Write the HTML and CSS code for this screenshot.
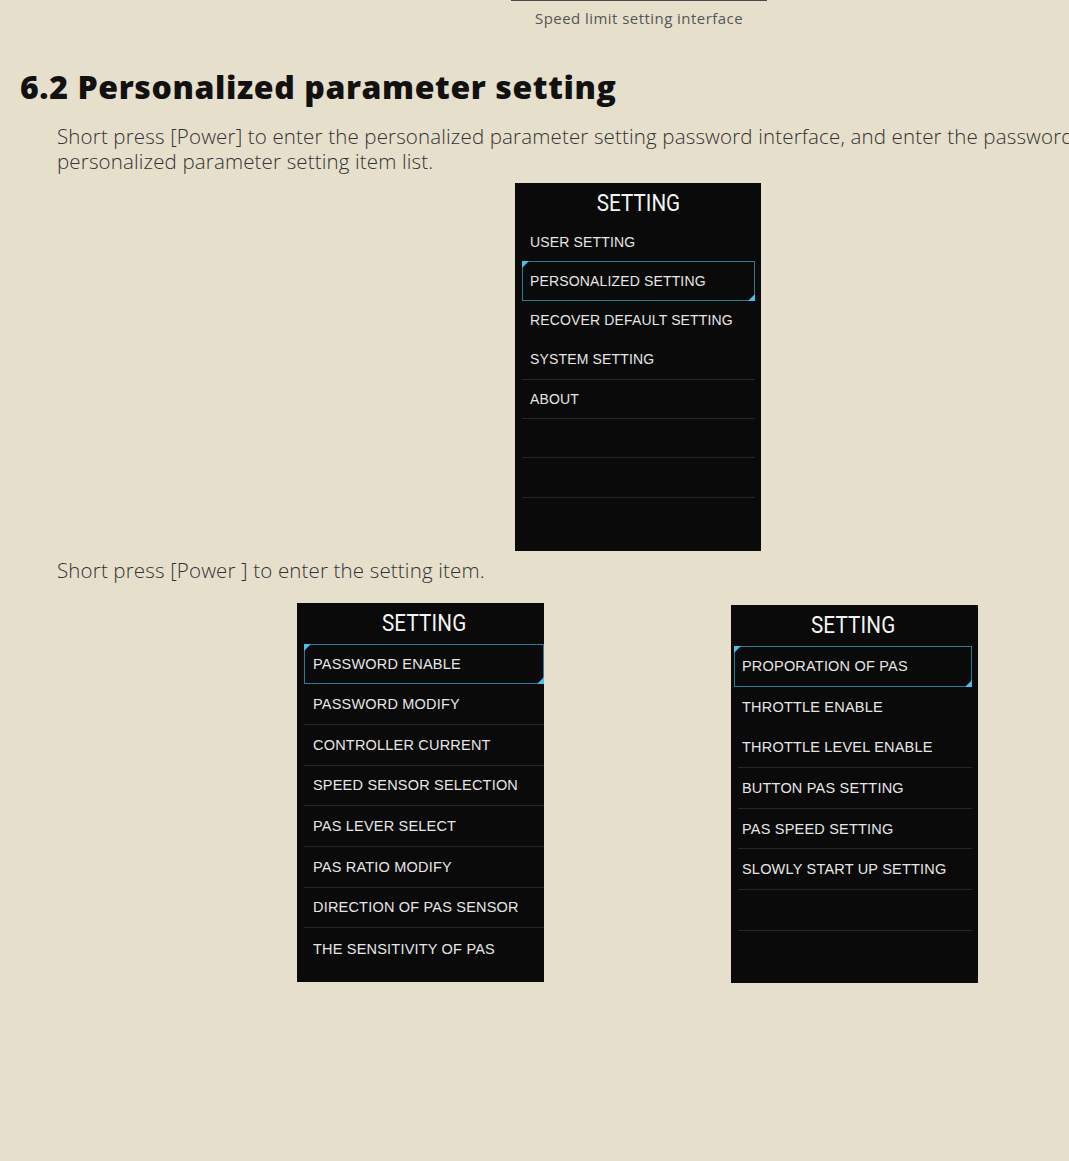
FILE: index.html
```html
<!DOCTYPE html>
<html>
<head>
<meta charset="utf-8">
<link rel="stylesheet" href="styles.css">
</head>
<body>
<div class="page">
  <div class="fig-top">
    <div class="fig-rule"></div>
    <div class="caption">Speed limit setting interface</div>
  </div>

  <h2 class="heading">6.2 Personalized parameter setting</h2>

  <p class="text">Short press [Power] to enter the personalized parameter setting password interface, and enter the password to enter the<br>personalized parameter setting item list.</p>

  <div class="screen screen-main">
    <div class="screen-title"><span>SETTING</span></div>
    <div class="row">USER SETTING</div>
    <div class="row active">PERSONALIZED SETTING</div>
    <div class="row">RECOVER DEFAULT SETTING</div>
    <div class="row line">SYSTEM SETTING</div>
    <div class="row line">ABOUT</div>
    <div class="row line"></div>
    <div class="row line"></div>
    <div class="row"></div>
  </div>

  <p class="text text-2">Short press [Power ] to enter the setting item.</p>

  <div class="pair">
    <div class="screen screen-a">
      <div class="screen-title"><span>SETTING</span></div>
      <div class="row active">PASSWORD ENABLE</div>
      <div class="row line">PASSWORD MODIFY</div>
      <div class="row line">CONTROLLER CURRENT</div>
      <div class="row line">SPEED SENSOR SELECTION</div>
      <div class="row line">PAS LEVER SELECT</div>
      <div class="row line">PAS RATIO MODIFY</div>
      <div class="row line">DIRECTION OF PAS SENSOR</div>
      <div class="row">THE SENSITIVITY OF PAS</div>
    </div>
    <div class="screen screen-b">
      <div class="screen-title"><span>SETTING</span></div>
      <div class="row active">PROPORATION OF PAS</div>
      <div class="row">THROTTLE ENABLE</div>
      <div class="row line">THROTTLE LEVEL ENABLE</div>
      <div class="row line">BUTTON PAS SETTING</div>
      <div class="row line">PAS SPEED SETTING</div>
      <div class="row line">SLOWLY START UP SETTING</div>
      <div class="row line"></div>
      <div class="row"></div>
    </div>
  </div>
</div>
</body>
</html>
```

FILE: styles.css
```css
html, body {
  margin: 0;
  padding: 0;
  background: #e6dfcc;
  overflow: hidden;
}

.page {
  width: 1069px;
  height: 1161px;
  overflow: hidden;
  font-family: "Lato", "Liberation Sans", sans-serif;
  color: #2b2b2b;
}

.fig-top {
  margin-left: 511px;
  width: 256px;
}

.fig-rule {
  height: 1px;
  background: #4a4a4a;
}

.caption {
  margin-top: 8px;
  text-align: center;
  font-family: "Open Sans", "Lato", sans-serif;
  font-size: 15px;
  line-height: 18px;
  color: #555;
  letter-spacing: 0.45px;
}

.heading {
  margin: 40px 0 0 20px;
  font-family: "Open Sans", sans-serif;
  font-weight: 800;
  font-size: 32px;
  line-height: 40px;
  letter-spacing: 0.6px;
  color: #111;
}

.text {
  margin: 17px 0 0 57px;
  font-family: "Open Sans", "Lato", sans-serif;
  font-size: 20.5px;
  line-height: 25px;
  font-weight: 300;
  letter-spacing: 0.15px;
  white-space: nowrap;
  color: #333;
}

.text-2 {
  margin-top: 7px;
}

.screen {
  background: #0a0a0a;
  box-sizing: border-box;
  font-family: "Liberation Sans", Arial, sans-serif;
  color: #e6e6e6;
}

.screen-title {
  text-align: center;
  font-family: "Roboto", "DejaVu Sans", sans-serif;
  font-size: 24px;
  color: #f4f4f4;
}

.screen-title span {
  display: inline-block;
  transform: scaleX(0.86);
}

.row {
  position: relative;
  box-sizing: border-box;
  display: flex;
  align-items: center;
  white-space: nowrap;
}

.row.line {
  border-bottom: 1px solid #262626;
}

.row.active {
  border: 1px solid #2d7a94;
}

.row.active::before,
.row.active::after {
  content: "";
  position: absolute;
  width: 0;
  height: 0;
}

.row.active::before {
  left: -1px;
  top: -1px;
  border-top: 7px solid #4cbde6;
  border-right: 7px solid transparent;
}

.row.active::after {
  right: -1px;
  bottom: -1px;
  border-bottom: 7px solid #4cbde6;
  border-left: 7px solid transparent;
}

/* main screen */
.screen-main {
  margin: 9px 0 0 515px;
  width: 246px;
  height: 368px;
  padding: 0 6px 0 7px;
}

.screen-main .screen-title {
  height: 39px;
  line-height: 40px;
}

.screen-main .row {
  height: 39.4px;
  padding-left: 8px;
  font-size: 14px;
  letter-spacing: 0.15px;
}

.screen-main .row.active {
  padding-left: 7px;
}

/* pair of screens */
.pair {
  display: flex;
  align-items: flex-start;
  gap: 187px;
  margin: 20px 0 0 297px;
}

.screen-a,
.screen-b {
  width: 247px;
  font-size: 14.5px;
  letter-spacing: 0.2px;
}

.screen-a {
  height: 379px;
  padding: 0 0 0 7px;
}

.screen-a .screen-title {
  height: 40.5px;
  line-height: 41px;
}

.screen-a .row {
  height: 40.7px;
  padding-left: 9px;
}

.screen-a .row.active {
  padding-left: 8px;
}

.screen-b {
  margin-top: 2px;
  height: 378px;
  padding: 0 6px 0 3px;
}

.screen-b .screen-title {
  height: 41px;
  line-height: 41px;
}

.screen-b .row {
  height: 40.7px;
  padding-left: 8px;
}

.screen-b .row.line {
  margin-left: 4px;
  padding-left: 4px;
}

.screen-b .row.active {
  padding-left: 7px;
}
```
